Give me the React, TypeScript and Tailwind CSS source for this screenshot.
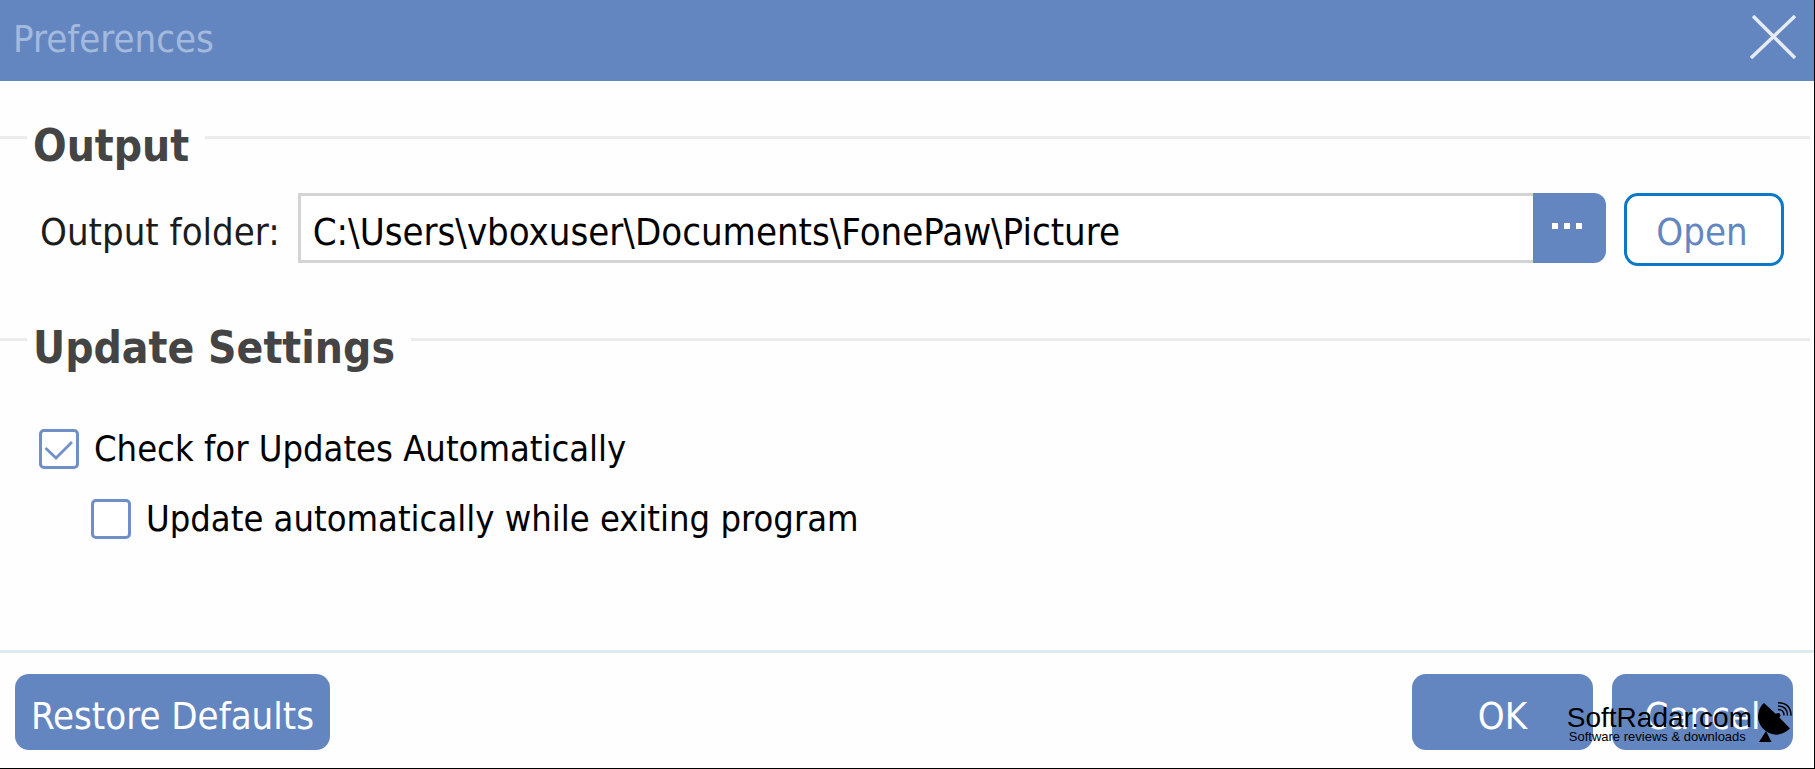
import React, { useState } from 'react';

const SectionTitle: React.FC<{ id: string; title: string }> = ({ id, title }) => (
  <div className="flex items-start pr-1">
    <span className="mt-[14px] h-[3px] w-[27px] bg-[#ececec]" />
    <h2 id={id} className="ml-[6px] mr-4 text-[44px] leading-[48px] font-bold text-[#444444]">
      {title}
    </h2>
    <span className="mt-[14px] h-[3px] flex-1 bg-[#ececec]" />
  </div>
);

interface CheckboxProps {
  label: string;
  checked: boolean;
  onChange: (checked: boolean) => void;
}

const Checkbox: React.FC<CheckboxProps> = ({ label, checked, onChange }) => (
  <label className="flex items-center gap-[15px] text-[36px] leading-10 text-black">
    <span className="grid size-10 shrink-0">
      <input
        type="checkbox"
        checked={checked}
        onChange={e => onChange(e.target.checked)}
        className="col-start-1 row-start-1 size-10 appearance-none rounded-[5px] border-3 border-[#6f8fc6] bg-white"
      />
      {checked && (
        <svg viewBox="0 0 40 40" className="pointer-events-none col-start-1 row-start-1 size-10" fill="none" stroke="#7390c8" strokeWidth="2.8">
          <path d="M6.5 19 L17 29 L33 13" />
        </svg>
      )}
    </span>
    {label}
  </label>
);

const PrimaryButton: React.FC<{ label: string; className: string }> = ({ label, className }) => (
  <button className={`h-[76px] rounded-[14px] bg-[#6486c0] pt-2 text-[38px] leading-10 text-white ${className}`}>
    {label}
  </button>
);

const DishIcon = () => (
  <svg viewBox="0 0 34 42" className="h-[42px] w-[34px]" fill="none">
    <path d="M6 1 L19 13 L32 26.5 C27 31 21 34 14 32 C6 30 0 22 0 15 C0 10 2 4 6 1 Z" fill="#000" />
    <path d="M8 29 L13.5 40 H1 Z" fill="#000" />
    <path d="M16 16 L21 12.5" stroke="#000" strokeWidth="2.5" />
    <circle cx="20" cy="13.5" r="2.4" fill="#000" />
    <path d="M20 7.5 Q26 7.5 26 13.5 M20 4 Q29.5 4 29.5 13.5 M20 0.8 Q33 1 33 13.8" stroke="#000" strokeWidth="1.4" />
  </svg>
);

const App: React.FC = () => {
  const [folder, setFolder] = useState('C:\\Users\\vboxuser\\Documents\\FonePaw\\Picture');
  const [checkUpdates, setCheckUpdates] = useState(true);
  const [updateOnExit, setUpdateOnExit] = useState(false);

  return (
    <div className="relative flex min-h-screen flex-col border-r border-b border-black bg-[#fefefe] font-['DejaVu_Sans_Condensed','DejaVu_Sans',sans-serif]">
      <header className="flex h-[81px] items-center justify-between bg-[#6486c0] pl-[13px] pr-[18px]">
        <h1 className="mb-1 text-[38px] leading-10 text-[#a3b9dd]">Preferences</h1>
        <button aria-label="Close" className="mb-2">
          <svg viewBox="0 0 46 44" className="h-11 w-[46px]" fill="none" stroke="#e6ecf6" strokeWidth="3.4">
            <path d="M3 1 L45 43 M45 1 L1 43" />
          </svg>
        </button>
      </header>

      <main className="flex-1 pt-[41px]">
        <section aria-labelledby="output-title">
          <SectionTitle id="output-title" title="Output" />
          <div className="mt-[23px] flex items-start pl-10 pr-[30px]">
            <label htmlFor="folder" className="mr-[18px] flex h-[70px] items-center pt-2 text-[38px] leading-10 text-[#1c1c1c]">
              Output folder:
            </label>
            <input
              id="folder"
              type="text"
              value={folder}
              onChange={e => setFolder(e.target.value)}
              className="h-[70px] min-w-0 flex-1 border-3 border-r-0 border-[#d4d4d4] bg-white pt-2 pl-3 text-[38px] leading-10 text-black outline-none"
            />
            <button aria-label="Browse" className="flex h-[70px] w-[73px] items-center justify-center rounded-r-[12px] bg-[#6486c0] pr-[6px] pb-1">
              <svg viewBox="0 0 30 6" className="h-[6px] w-[30px]" fill="#fff">
                <path d="M0 0 H6 V6 H0 Z M12 0 H18 V6 H12 Z M24 0 H30 V6 H24 Z" />
              </svg>
            </button>
            <button className="ml-[18px] h-[73px] w-40 rounded-[14px] border-3 border-[#0b78c8] bg-white pt-1 pr-1 text-[38px] leading-10 text-[#6486c0]">
              Open
            </button>
          </div>
        </section>

        <section aria-labelledby="update-title" className="mt-[58px]">
          <SectionTitle id="update-title" title="Update Settings" />
          <div className="mt-[57px] flex flex-col gap-[30px] pl-[39px]">
            <Checkbox label="Check for Updates Automatically" checked={checkUpdates} onChange={setCheckUpdates} />
            <div className="pl-[52px]">
              <Checkbox label="Update automatically while exiting program" checked={updateOnExit} onChange={setUpdateOnExit} />
            </div>
          </div>
        </section>
      </main>

      <footer className="flex items-center border-t-3 border-[#dfeaf0] pt-[21px] pb-[18px] pl-[15px] pr-[21px]">
        <PrimaryButton label="Restore Defaults" className="w-[315px]" />
        <PrimaryButton label="OK" className="ml-auto w-[181px]" />
        <PrimaryButton label="Cancel" className="ml-[19px] w-[181px]" />
      </footer>

      {/* watermark */}
      <div className="pointer-events-none absolute right-[22px] bottom-6 flex items-end gap-[6px] font-['Liberation_Sans',Arial,sans-serif] text-black">
        <div>
          <div className="text-[28px] leading-6">SoftRadar.com</div>
          <div className="pl-[2px] text-[13px] leading-[14px]">Software reviews &amp; downloads</div>
        </div>
        <DishIcon />
      </div>
    </div>
  );
};

export default App;
